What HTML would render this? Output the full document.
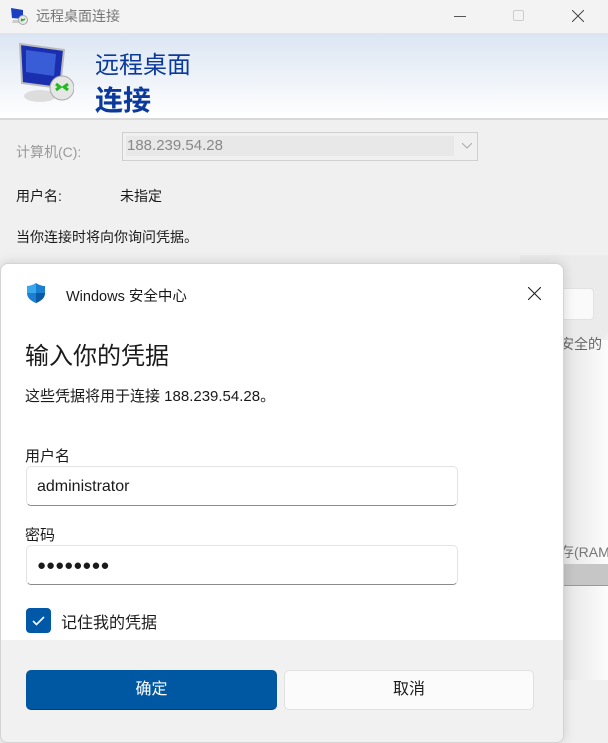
<!DOCTYPE html>
<html><head><meta charset="utf-8"><style>
*{margin:0;padding:0;box-sizing:border-box}
body{width:608px;height:739px;overflow:hidden;background:#f0f0f0;position:relative;font-family:"Liberation Sans","Noto Sans CJK SC",sans-serif;color:#1a1a1a}
.a{position:absolute;white-space:nowrap}
</style></head><body>
<div class="a" style="left:0;top:0;width:608px;height:33px;background:#f3f3f3"></div>
<svg class="a" style="left:9px;top:6px" width="20" height="20" viewBox="0 0 20 20"><path d="M2 2l12 2v9l-11-1z" fill="#1a3fc0"/><path d="M4 14h8l2 3H3z" fill="#ccc"/><circle cx="14" cy="14" r="4.5" fill="#e8e8e8" stroke="#aaa"/><path d="M12 13l2 1-2 1M16 13l-2 1" stroke="#2a2" stroke-width="1.3" fill="none"/></svg>
<div class="a" style="left:36px;top:6px;font-size:14px;color:#777">远程桌面连接</div>
<div class="a" style="left:454px;top:16px;width:12px;height:1px;background:#555"></div>
<div class="a" style="left:513px;top:10px;width:11px;height:11px;border:1px solid #ccc;border-radius:2px"></div>
<svg class="a" style="left:572px;top:10px" width="12" height="12" viewBox="0 0 12 12"><path d="M0 0L12 12M12 0L0 12" stroke="#444" stroke-width="1"/></svg>
<div class="a" style="left:0;top:33px;width:608px;height:85px;background:linear-gradient(#dbe5f2,#fff)"></div>
<div class="a" style="left:0;top:118px;width:608px;height:2px;background:#d8d8d8"></div>
<svg class="a" style="left:16px;top:42px" width="58" height="62" viewBox="0 0 58 62"><path d="M4 2l44 6-4 38-38-5z" fill="#1a2fb0" stroke="#bbb" stroke-width="2"/><path d="M10 8l30 4-2 22-28-4z" fill="#4f7df0" opacity=".6"/><ellipse cx="24" cy="54" rx="16" ry="6" fill="#ddd"/><circle cx="46" cy="46" r="12" fill="#e6e6e6" stroke="#aaa"/><path d="M40 42l4 3-4 3M52 42l-4 3 4 3" stroke="#2b2" stroke-width="3" fill="none"/></svg>
<div class="a" style="left:95px;top:45px;font-size:24px;color:#0b3a9c">远程桌面</div>
<div class="a" style="left:95px;top:79px;font-size:28px;font-weight:bold;color:#0b3a9c">连接</div>
<div class="a" style="left:16px;top:142px;font-size:14px;color:#999">计算机(C):</div>
<div class="a" style="left:122px;top:132px;width:356px;height:29px;border:1px solid #cfcfcf;background:#f0f0f0"></div>
<div class="a" style="left:126px;top:136px;width:328px;height:20px;background:#e8e8e8"></div>
<div class="a" style="left:127px;top:137px;font-size:15px;color:#888">188.239.54.28</div>
<svg class="a" style="left:462px;top:143px" width="10" height="6" viewBox="0 0 10 6"><path d="M0 0l5 5 5-5" stroke="#aaa" fill="none"/></svg>
<div class="a" style="left:16px;top:186px;font-size:14px">用户名:</div>
<div class="a" style="left:120px;top:186px;font-size:14px">未指定</div>
<div class="a" style="left:16px;top:227px;font-size:14px">当你连接时将向你询问凭据。</div>
<div class="a" style="left:520px;top:255px;width:88px;height:85px;background:#ebebeb;border-radius:0 0 10px 0"></div>
<div class="a" style="left:560px;top:288px;width:34px;height:32px;background:#fafafa;border:1px solid #e2e2e2;border-radius:4px"></div>
<div class="a" style="left:560px;top:340px;width:48px;height:340px;background:linear-gradient(90deg,#e4e4e4,#fcfcfc)"></div>
<div class="a" style="left:560px;top:334px;font-size:14px;color:#666">安全的</div>
<div class="a" style="left:560px;top:542px;font-size:14px;color:#777">存(RAM</div>
<div class="a" style="left:560px;top:564px;width:48px;height:22px;background:#c6c6c6;border-bottom:1px solid #999"></div>
<div class="a" style="left:0;top:263px;width:564px;height:480px;background:#fff;border:1px solid #d4d4d4;border-radius:8px;overflow:hidden;box-shadow:0 0 12px rgba(0,0,0,.15)">
<div class="a" style="left:0;top:376px;width:564px;height:110px;background:#f1f1f1"></div>
</div>
<svg class="a" style="left:26px;top:282px" width="20" height="22" viewBox="0 0 20 22"><path d="M10 1C7 3 4 4 1 4v7c0 5 4 8 9 10 5-2 9-5 9-10V4c-3 0-6-1-9-3z" fill="#1a7fd0"/><path d="M10 1C7 3 4 4 1 4v7h9z" fill="#3aa6ee"/><path d="M10 11v10c5-2 9-5 9-10z" fill="#0b5aa8"/></svg>
<div class="a" style="left:66px;top:285px;font-size:14.5px">Windows 安全中心</div>
<svg class="a" style="left:528px;top:287px" width="13" height="13" viewBox="0 0 13 13"><path d="M0 0L13 13M13 0L0 13" stroke="#222" stroke-width="1.1"/></svg>
<div class="a" style="left:25px;top:336px;font-size:24px">输入你的凭据</div>
<div class="a" style="left:25px;top:385px;font-size:15px">这些凭据将用于连接 188.239.54.28。</div>
<div class="a" style="left:25px;top:445px;font-size:15px">用户名</div>
<div class="a" style="left:26px;top:466px;width:432px;height:40px;border:1px solid #e3e3e3;border-bottom:1px solid #8a8a8a;border-radius:5px;background:#fff"></div>
<div class="a" style="left:37px;top:478px;font-size:16px">administrator</div>
<div class="a" style="left:25px;top:524px;font-size:15px">密码</div>
<div class="a" style="left:26px;top:545px;width:432px;height:40px;border:1px solid #e3e3e3;border-bottom:1px solid #8a8a8a;border-radius:5px;background:#fff"></div>
<div class="a" style="left:37px;top:557px;font-size:15px;letter-spacing:0px">●●●●●●●●</div>
<div class="a" style="left:26px;top:608px;width:25px;height:25px;background:#0058a6;border-radius:4px"></div>
<svg class="a" style="left:31px;top:613px" width="15" height="15" viewBox="0 0 15 15"><path d="M2 8l3.5 3.5L13 4" stroke="#fff" stroke-width="1.6" fill="none"/></svg>
<div class="a" style="left:61px;top:609px;font-size:16px">记住我的凭据</div>
<div class="a" style="left:26px;top:670px;width:251px;height:40px;background:#0057a2;border-radius:5px;border-bottom:1px solid #003f7a;color:#fff;font-size:16px;text-align:center;line-height:40px">确定</div>
<div class="a" style="left:284px;top:670px;width:250px;height:40px;background:#fbfbfb;border:1px solid #e0e0e0;border-radius:5px;font-size:16px;text-align:center;line-height:38px">取消</div>
</body></html>
